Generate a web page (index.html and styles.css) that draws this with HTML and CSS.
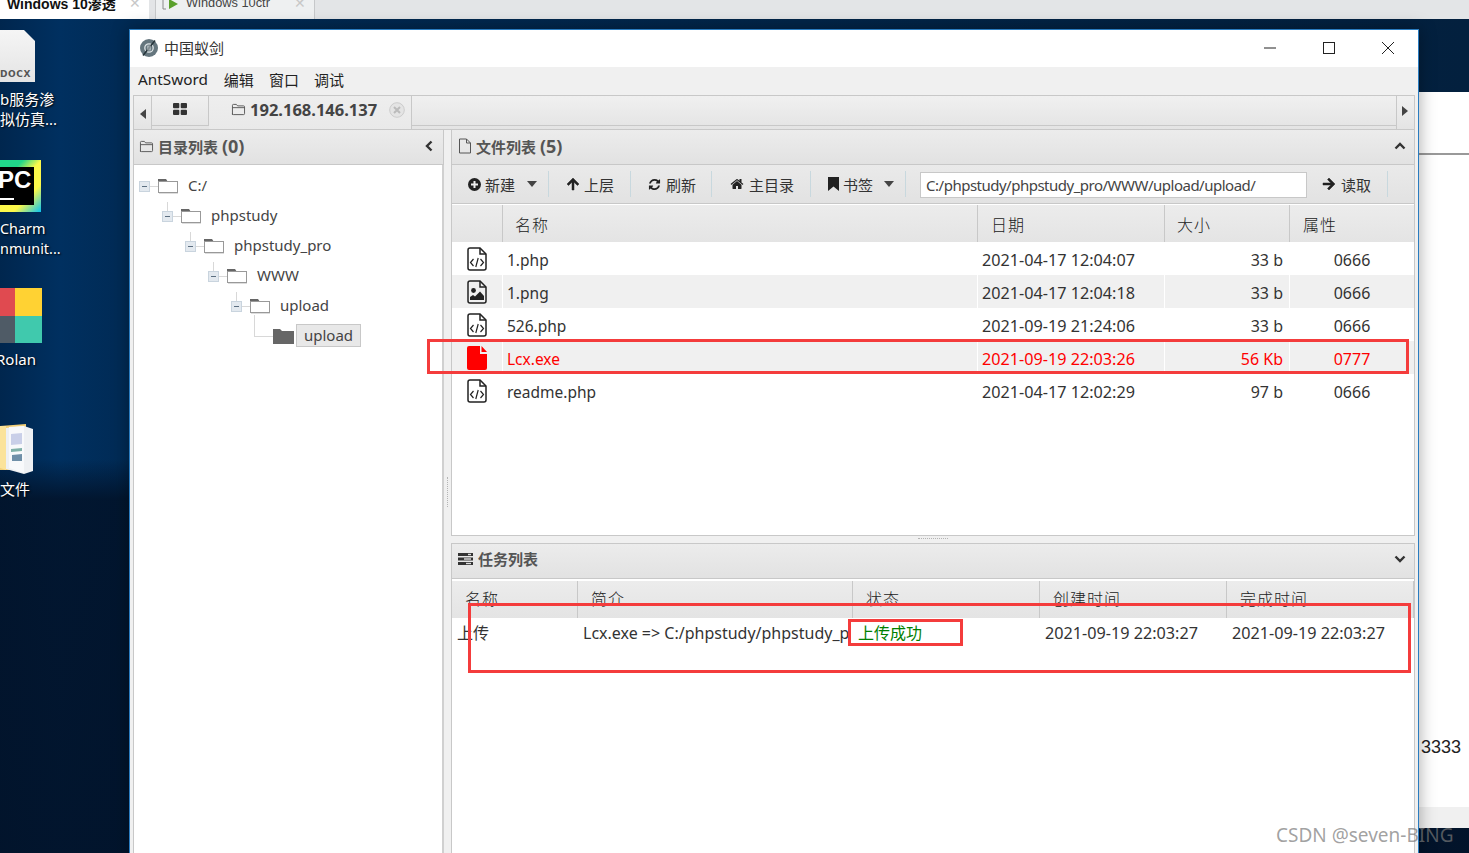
FILE: index.html
```html
<!DOCTYPE html>
<html lang="zh-CN">
<head>
<meta charset="utf-8">
<title>中国蚁剑</title>
<link rel="stylesheet" href="styles.css">
</head>
<body>
<svg class="defs" width="0" height="0" aria-hidden="true">
  <symbol id="i-folder" viewBox="0 0 16 14"><path d="M1.5 12.5V2.5q0-1 1-1h3.2l1.3 1.6h6.5q1 0 1 1v7.4q0 1-1 1h-11q-1 0-1-1zM1.5 5h13" fill="none" stroke="currentColor" stroke-width="1"/></symbol>
  <symbol id="i-tfolder" viewBox="0 0 20 16"><path d="M0 4V1h8l2 3z" fill="#666"/><rect x=".5" y="3.500" width="19" height="11" fill="#fff" stroke="#999"/><path d="M1 15.500h19" stroke="#ddd"/></symbol>
  <symbol id="i-file" viewBox="0 0 14 16"><path d="M1.5 1h7l4 4v10h-11zM8.5 1v4h4" fill="none" stroke="currentColor" stroke-width="1"/></symbol>
  <symbol id="i-refresh" viewBox="0 0 1792 1792"><path fill="currentColor" d="M1639 1056q0 5-1 7-64 268-268 434.5t-478 166.5q-146 0-282.5-55t-243.5-157l-129 129q-19 19-45 19t-45-19-19-45v-448q0-26 19-45t45-19h448q26 0 45 19t19 45-19 45l-137 137q71 66 161 102t187 36q134 0 250-65t186-179q11-17 53-117 8-23 30-23h192q13 0 22.5 9.5t9.5 22.5zm25-800v448q0 26-19 45t-45 19h-448q-26 0-45-19t-19-45 19-45l138-138q-148-137-349-137-134 0-250 65t-186 179q-11 17-53 117-8 23-30 23h-199q-13 0-22.5-9.5t-9.5-22.5v-7q65-268 270-434.5t480-166.5q146 0 284 55.5t245 156.5l130-129q19-19 45-19t45 19 19 45z"/></symbol>
  <symbol id="i-home" viewBox="0 0 1792 1792"><path fill="currentColor" d="M1472 992v480q0 26-19 45t-45 19h-384v-384h-256v384h-384q-26 0-45-19t-19-45v-480q0-1 .5-3t.5-3l575-474 575 474q1 2 1 6zm223-69l-62 74q-8 9-21 11h-3q-13 0-21-7l-692-577-692 577q-12 8-24 7-13-2-21-11l-62-74q-8-10-7-23.5t11-21.5l719-599q32-26 76-26t76 26l244 204v-195q0-14 9-23t23-9h192q14 0 23 9t9 23v408l219 182q10 8 11 21.5t-7 23.5z"/></symbol>
  <symbol id="i-code" viewBox="0 0 20 24"><path d="M1 3q0-2 2-2h10l6 6v14q0 2-2 2H3q-2 0-2-2z" fill="none" stroke="currentColor" stroke-width="1.5"/><path d="M13 1v6h6" fill="none" stroke="currentColor" stroke-width="1.5"/><path d="M6.5 12l-3 3.5 3 3.5M13.5 12l3 3.5-3 3.5M11.2 11l-2.4 9" fill="none" stroke="currentColor" stroke-width="1.2"/></symbol>
  <symbol id="i-image" viewBox="0 0 20 24"><path d="M1 3q0-2 2-2h10l6 6v14q0 2-2 2H3q-2 0-2-2z" fill="none" stroke="currentColor" stroke-width="1.5"/><path d="M13 1v6h6" fill="none" stroke="currentColor" stroke-width="1.5"/><circle cx="6.5" cy="10.5" r="2.4" fill="currentColor"/><path d="M3 20v-3l3-2 2 1.500 5-5 4 4.500V20z" fill="currentColor"/></symbol>
  <symbol id="i-solid" viewBox="0 0 20 24"><path d="M0 2q0-2 2-2h11v8h7v14q0 2-2 2H2q-2 0-2-2z M14.500 0l5.500 6h-5.500z" fill="currentColor"/></symbol>
</svg>

<header class="hosttabs">
  <div class="hosttab active"><span class="hosttab-text">Windows 10渗透</span><span class="hosttab-x">✕</span></div>
  <div class="hosttab other">
    <svg class="vm-icon" viewBox="0 0 18 14" width="18" height="14"><path d="M3 1H1v11h3" fill="none" stroke="#8a8a8a"/><path d="M7 2l9 5-9 5z" fill="#5aa02c"/></svg>
    <span class="hosttab-text light">Windows 10ctr</span><span class="hosttab-x">✕</span>
  </div>
</header>

<main class="desktop">
  <div class="shortcut sc-docx">
    <div class="docx"><span>DOCX</span></div>
  </div>
  <div class="dlabel l-docx">b服务渗<br>拟仿真...</div>
  <div class="shortcut sc-pc"><div class="pc-in"><span>PC</span><i></i></div></div>
  <div class="dlabel l-pc">Charm<br>nmunit...</div>
  <div class="shortcut sc-rolan"><i class="r1"></i><i class="r2"></i><i class="r3"></i><i class="r4"></i></div>
  <div class="dlabel l-rolan">Rolan</div>
  <div class="shortcut sc-files">
    <svg viewBox="0 0 34 52" width="34" height="52"><path d="M0 4l26-2v46H0z" fill="#f2cf78"/><path d="M6 6l18-2 9 3v42l-9 3-18-5z" fill="#eef0f3"/><path d="M9 5l15-1v47L9 46z" fill="#f8f9fb"/><path d="M11 12l11-1v11l-11 1z" fill="#c9cfe8"/><path d="M11 27l11-1v3l-11 1z" fill="#7fb0a8"/><path d="M12 33l10-1v7l-10 0z" fill="#6f8fa8"/><path d="M0 4h6v44l-6-2z" fill="#fbe39a"/></svg>
  </div>
  <div class="dlabel l-files">文件</div>

  <div class="backwin">
    <div class="backwin-line"></div>
    <div class="backwin-num">3333</div>
    <div class="backwin-foot"></div>
  </div>

  <section class="window">
    <div class="titlebar">
      <svg class="logo" viewBox="0 0 20 20" width="20" height="20"><circle cx="10" cy="10" r="9" fill="#65767e"/><circle cx="10" cy="10" r="4.200" fill="none" stroke="#dfe5e7" stroke-width="1.300"/><path d="M16 2.500L4 17.500" stroke="#26343a" stroke-width="1.600"/><path d="M9 7.500v5M11 7.500v5" stroke="#dfe5e7"/></svg>
      <span class="title-text">中国蚁剑</span>
      <div class="winctl">
        <svg viewBox="0 0 14 14" width="14" height="14"><path d="M1 7h12" stroke="#222"/></svg>
        <svg viewBox="0 0 14 14" width="14" height="14"><rect x="1.500" y="1.500" width="11" height="11" fill="none" stroke="#222"/></svg>
        <svg viewBox="0 0 14 14" width="14" height="14"><path d="M1 1l12 12M13 1L1 13" stroke="#222"/></svg>
      </div>
    </div>
    <nav class="menubar"><span class="menu-ant">AntSword</span><span>编辑</span><span>窗口</span><span>调试</span></nav>

    <div class="app">
      <div class="tabbar">
        <div class="tab-arrow"><svg viewBox="0 0 6 10" width="6" height="10"><path d="M6 0v10L0 5z" fill="#444"/></svg></div>
        <div class="tab tab-grid">
          <svg viewBox="0 0 14 12" width="14" height="12"><g fill="#333"><rect width="6.300" height="5.300" rx="1"/><rect x="7.700" width="6.300" height="5.300" rx="1"/><rect y="6.700" width="6.300" height="5.300" rx="1"/><rect x="7.700" y="6.700" width="6.300" height="5.300" rx="1"/></g></svg>
        </div>
        <div class="tab tab-active">
          <svg class="ic-muted" width="15" height="13"><use href="#i-folder"/></svg>
          <span class="tab-ip">192.168.146.137</span>
          <svg class="tab-close" viewBox="0 0 16 16" width="16" height="16"><circle cx="8" cy="8" r="7.300" fill="#e4e4e4" stroke="#ccc"/><path d="M5 5l6 6M11 5l-6 6" stroke="#bbb" stroke-width="2"/></svg>
        </div>
        <div class="tab-fill"></div>
        <div class="tab-arrow tab-arrow-r"><svg viewBox="0 0 6 10" width="6" height="10"><path d="M0 0v10l6-5z" fill="#444"/></svg></div>
      </div>

      <div class="panes">
        <aside class="pane-left">
          <div class="phead">
            <svg class="ic-muted" width="15" height="13"><use href="#i-folder"/></svg>
            <span class="phead-text">目录列表 <span class="pcount">(0)</span></span>
            <svg class="chev" viewBox="0 0 10 12" width="10" height="12"><path d="M7.500 1.500L3 6l4.500 4.500" fill="none" stroke="#333" stroke-width="2.400"/></svg>
          </div>
          <div class="tree">
            <div class="node lv0 first"><i class="exp"></i><i class="dash"></i><svg class="tfolder" width="20" height="16"><use href="#i-tfolder"/></svg><span class="nlabel">C:/</span></div>
            <div class="node lv1"><i class="exp"></i><i class="dash"></i><svg class="tfolder" width="20" height="16"><use href="#i-tfolder"/></svg><span class="nlabel">phpstudy</span></div>
            <div class="node lv2"><i class="exp"></i><i class="dash"></i><svg class="tfolder" width="20" height="16"><use href="#i-tfolder"/></svg><span class="nlabel">phpstudy_pro</span></div>
            <div class="node lv3"><i class="exp"></i><i class="dash"></i><svg class="tfolder" width="20" height="16"><use href="#i-tfolder"/></svg><span class="nlabel">WWW</span></div>
            <div class="node lv4"><i class="exp"></i><i class="dash"></i><svg class="tfolder" width="20" height="16"><use href="#i-tfolder"/></svg><span class="nlabel">upload</span></div>
            <div class="node lv5 leaf"><i class="elbow"></i><svg class="tfolder solid" viewBox="0 0 21 16" width="21" height="16"><path d="M0 16V1h7l2 2h12v13z" fill="#666"/></svg><span class="nlabel selected">upload</span></div>
          </div>
        </aside>

        <div class="gutter"><i class="vdots"></i></div>

        <div class="pane-right">
          <section class="files">
            <div class="phead phead-r">
              <svg class="ic-muted" width="14" height="16"><use href="#i-file"/></svg>
              <span class="phead-text">文件列表 <span class="pcount">(5)</span></span>
              <svg class="chev" viewBox="0 0 12 10" width="12" height="10"><path d="M1.500 7.500L6 3l4.500 4.500" fill="none" stroke="#333" stroke-width="2.400"/></svg>
            </div>
            <div class="toolbar">
              <div class="tbtn b-new">
                <svg viewBox="0 0 13 13" width="13" height="13"><circle cx="6.500" cy="6.500" r="6.500" fill="#222"/><path d="M6.500 3v7M3 6.500h7" stroke="#eee" stroke-width="2"/></svg>
                <span>新建</span><svg class="caret" viewBox="0 0 10 6" width="10" height="6"><path d="M0 0h10L5 6z" fill="#444"/></svg>
              </div>
              <div class="tbtn b-up">
                <svg viewBox="0 0 14 14" width="14" height="14"><path d="M7 1L1 7l1.500 1.500L6 5.200V13h2V5.200l3.500 3.300L13 7z" fill="#222" stroke="#222" stroke-width=".5"/></svg>
                <span>上层</span>
              </div>
              <div class="tbtn b-ref"><svg width="13" height="13"><use href="#i-refresh"/></svg><span>刷新</span></div>
              <div class="tbtn b-home"><svg width="14" height="14"><use href="#i-home"/></svg><span>主目录</span></div>
              <div class="tbtn b-mark">
                <svg viewBox="0 0 11 14" width="11" height="14"><path d="M0 0h11v14L5.500 9.500 0 14z" fill="#222"/></svg>
                <span>书签</span><svg class="caret" viewBox="0 0 10 6" width="10" height="6"><path d="M0 0h10L5 6z" fill="#444"/></svg>
              </div>
              <input class="pathbox" type="text" value="C:/phpstudy/phpstudy_pro/WWW/upload/upload/" aria-label="路径">
              <div class="tbtn b-read">
                <svg viewBox="0 0 14 14" width="14" height="14"><path d="M13 7L7 1 5.500 2.500 8.800 6H1v2h7.800l-3.300 3.500L7 13z" fill="#222" stroke="#222" stroke-width=".5"/></svg>
                <span>读取</span>
              </div>
            </div>
            <div class="fgrid">
              <div class="fhead"><div></div><div>名称</div><div>日期</div><div>大小</div><div>属性</div></div>
              <div class="frow"><div class="ficon"><svg width="20" height="24"><use href="#i-code"/></svg></div><div class="fname">1.php</div><div class="fdate">2021-04-17 12:04:07</div><div class="fsize">33 b</div><div class="fattr">0666</div></div>
              <div class="frow alt"><div class="ficon"><svg width="20" height="24"><use href="#i-image"/></svg></div><div class="fname">1.png</div><div class="fdate">2021-04-17 12:04:18</div><div class="fsize">33 b</div><div class="fattr">0666</div></div>
              <div class="frow"><div class="ficon"><svg width="20" height="24"><use href="#i-code"/></svg></div><div class="fname">526.php</div><div class="fdate">2021-09-19 21:24:06</div><div class="fsize">33 b</div><div class="fattr">0666</div></div>
              <div class="frow alt red"><div class="ficon"><svg width="20" height="24"><use href="#i-solid"/></svg></div><div class="fname">Lcx.exe</div><div class="fdate">2021-09-19 22:03:26</div><div class="fsize">56 Kb</div><div class="fattr">0777</div></div>
              <div class="frow"><div class="ficon"><svg width="20" height="24"><use href="#i-code"/></svg></div><div class="fname">readme.php</div><div class="fdate">2021-04-17 12:02:29</div><div class="fsize">97 b</div><div class="fattr">0666</div></div>
            </div>
          </section>

          <div class="hsplit"><i class="hdots"></i></div>

          <section class="tasks">
            <div class="phead phead-r phead-t">
              <svg viewBox="0 0 15 12" width="15" height="12"><g fill="#333"><rect width="15" height="3"/><rect y="4.500" width="15" height="3"/><rect y="9" width="15" height="3"/></g><g fill="#ddd"><rect x="10" y=".8" width="3" height="1.400"/><rect x="6" y="5.300" width="7" height="1.400"/><rect x="8" y="9.800" width="5" height="1.400"/></g></svg>
              <span class="phead-text">任务列表</span>
              <svg class="chev" viewBox="0 0 12 10" width="12" height="10"><path d="M1.500 2.500L6 7l4.500-4.500" fill="none" stroke="#333" stroke-width="2.400"/></svg>
            </div>
            <div class="tgrid">
              <div class="thead"><div>名称</div><div>简介</div><div>状态</div><div>创建时间</div><div>完成时间</div></div>
              <div class="trow"><div>上传</div><div class="clip">Lcx.exe =&gt; C:/phpstudy/phpstudy_p</div><div class="ok">上传成功</div><div class="tdate">2021-09-19 22:03:27</div><div class="tdate">2021-09-19 22:03:27</div></div>
            </div>
          </section>
        </div>
      </div>
    </div>
  </section>

  <div class="mark m-file"></div>
  <div class="mark m-task"></div>
  <div class="mark m-status"></div>
  <div class="watermark">CSDN @seven-BING</div>
</main>
</body>
</html>
```
FILE: styles.css
```css
* { box-sizing: border-box; }
html, body { margin: 0; height: 100%; overflow: hidden; }
body {
  display: flex;
  flex-direction: column;
  font-family: "Noto Sans", "Noto Sans CJK SC", sans-serif;
  font-size: 16px;
  color: #333;
}
.defs { position: absolute; }

/* host VM tabs */
.hosttabs { height: 19px; flex: none; display: flex; background: #e3e5e7; overflow: hidden; }
.hosttab { height: 19px; display: flex; align-items: center; position: relative; }
.hosttab.active { width: 149px; background: #fff; padding-left: 7px; }
.hosttab.other { width: 160px; margin-left: 6px; padding-left: 6px; background: #eef0f1; border-left: 1px solid #c6c8ca; border-right: 1px solid #c6c8ca; }
.hosttab-text { font: bold 14px/1 "Liberation Sans", "Noto Sans CJK SC", sans-serif; color: #111; position: relative; top: -6px; white-space: nowrap; }
.hosttab-text.light { font-weight: normal; color: #444; font-size: 12.800px; margin-left: 6px; }
.hosttab-x { position: absolute; right: 8px; top: -4px; color: #c8c8c8; font-size: 14px; line-height: 14px; }
.vm-icon { position: relative; top: -6px; }

/* desktop canvas */
.desktop {
  position: relative;
  flex: 1;
  background:
    linear-gradient(180deg, rgba(2,20,44,0) 0, rgba(2,20,44,0) 440px, rgba(2,18,40,.85) 480px, rgba(2,18,40,.9) 100%),
    linear-gradient(90deg, #00264e 0, #003060 60px, #012a54 130px, #03203e 100%);
}
.shortcut { position: absolute; left: 0; }
.sc-docx { top: 11px; }
.docx {
  width: 35px; height: 52px;
  background: linear-gradient(180deg, #f5f5f5, #e4e4e4);
  clip-path: polygon(0 0, 24px 0, 35px 11px, 35px 52px, 0 52px);
  position: relative;
}
.docx span { position: absolute; left: 0; bottom: 3px; font: bold 9px/1 "DejaVu Sans", sans-serif; letter-spacing: .6px; color: #555; }
.sc-pc {
  top: 141px; width: 41px; height: 52px;
  background: linear-gradient(135deg, #21d789 0, #21d789 25%, #fcf84a 45%, #fcf84a 70%, #07c3f2 100%);
}
.pc-in { position: absolute; left: 0; top: 7px; width: 34px; height: 38px; background: #000; overflow: hidden; }
.pc-in span { position: absolute; left: -2px; top: 1px; font: bold 24px/24px "Liberation Sans", sans-serif; color: #fff; }
.pc-in i { position: absolute; left: 0; top: 31px; width: 14px; height: 2px; background: #fff; }
.sc-rolan { top: 269px; width: 42px; height: 55px; display: grid; grid-template-columns: 15px 27px; grid-template-rows: 28px 27px; }
.r1 { background: #e04a50; } .r2 { background: #ffd233; } .r3 { background: #4f5b66; } .r4 { background: #40c9ad; }
.sc-files { top: 403px; }
.sc-files svg { display: block; }
.dlabel { position: absolute; left: 0; font-size: 15px; line-height: 20px; color: #fff; text-shadow: 1px 1px 2px #000; white-space: nowrap; }
.l-docx { top: 70px; }
.l-pc { top: 200px; font-size: 14.400px; }
.l-rolan { top: 330px; left: -4px; }
.l-files { top: 460px; }

/* window behind */
.backwin { position: absolute; left: 1400px; top: 73px; width: 69px; height: 736px; background: #fff; }
.backwin-line { position: absolute; left: 0; right: 0; top: 61px; height: 2px; background: #999; }
.backwin-num { position: absolute; left: 21px; top: 643px; font: 18px/24px "Liberation Sans", sans-serif; color: #222; }
.backwin-foot { position: absolute; left: 0; right: 0; bottom: 0; height: 21px; background: #f0f0f0; }

/* main window */
.window {
  position: absolute; left: 129px; top: 10px; width: 1290px; height: 830px;
  background: #f0f0f0;
  border: 1px solid #2a7cc0;
  box-shadow: 0 0 16px rgba(0,0,0,.35);
  display: flex; flex-direction: column;
}
.titlebar { height: 37px; flex: none; background: #fff; display: flex; align-items: center; padding: 0 0 2px 9px; }
.logo { margin-right: 5px; }
.title-text { font-size: 15px; color: #333; }
.winctl { margin-left: auto; display: flex; gap: 45px; padding-right: 23px; }
.menubar { height: 25px; flex: none; background: #f0f0f0; display: flex; align-items: center; padding: 0 0 1px 8px; color: #222; gap: 15px; }
.menubar span { font-size: 15px; }
.menubar .menu-ant { font-size: 15.300px; margin-right: 1px; }
.app { flex: 1; min-height: 0; padding: 3px 3px 0 3px; display: flex; flex-direction: column; background: #f0f0f0; }

.tabbar { height: 35px; flex: none; display: flex; border: 1px solid #c8c8c8; background: linear-gradient(180deg, #f0f0f0, #e4e4e4); }
.tab-arrow { width: 18px; flex: none; display: flex; align-items: center; justify-content: center; border-right: 1px solid #c8c8c8; padding-top: 3px; }
.tab-arrow-r { border-right: 0; border-left: 1px solid #c8c8c8; padding: 0 2px 3px 0; }
.tab { height: 30px; display: flex; align-items: center; border-right: 1px solid #c8c8c8; flex: none; }
.tab-grid { width: 57px; justify-content: center; border-bottom: 1px solid #c8c8c8; padding-bottom: 4px; }
.tab-active { width: 203px; padding-left: 22px; height: 33px; padding-bottom: 6px; background: linear-gradient(180deg, #eeeeee, #e9e9e9); }
.ic-muted { color: #555; flex: none; }
.tab-ip { font-weight: bold; font-size: 16.500px; color: #444; margin-left: 4px; }
.tab-close { margin-left: 12px; }
.tab-fill { flex: 1; height: 30px; border-bottom: 1px solid #c8c8c8; }

.panes { flex: 1; min-height: 0; display: flex; }
.pane-left { width: 311px; flex: none; display: flex; flex-direction: column; border-left: 1px solid #c8c8c8; }
.phead {
  height: 35px; flex: none; display: flex; align-items: center; padding: 0 9px 2px 5px;
  background: linear-gradient(180deg, #ececec, #e2e2e2);
  border-bottom: 1px solid #c8c8c8; border-right: 1px solid #c8c8c8;
  color: #555;
}
.phead-text { font-size: 15px; font-weight: bold; margin-left: 4px; color: #555; white-space: nowrap; }
.pcount { font-size: 18px; }
.phead .chev { margin-left: auto; }

.tree { flex: 1; background: #fff; border-right: 2px solid #d0d0d0; padding-top: 6px; width: 310px; }
.node { height: 30px; display: flex; align-items: center; position: relative; color: #444; font-size: 15px; }
.lv0 { padding-left: 5px; } .lv1 { padding-left: 28px; } .lv2 { padding-left: 51px; }
.lv3 { padding-left: 74px; } .lv4 { padding-left: 97px; } .lv5 { padding-left: 120px; }
.exp { width: 11px; height: 11px; flex: none; background: #e3e9ef; border: 1px solid #c9d4de; position: relative; }
.exp::after { content: ""; position: absolute; left: 2px; top: 4px; width: 5px; height: 1px; background: #5b6e80; }
.node:not(.first):not(.leaf) .exp::before { content: ""; position: absolute; left: 4px; top: -10px; width: 1px; height: 9px; background: #d8d8d8; }
.dash { width: 8px; height: 1px; flex: none; background: #d8d8d8; }
.tfolder { flex: none; }
.nlabel { margin: -2px 0 0 10px; white-space: nowrap; }
.lv5 .nlabel { margin: -2px 0 0 2px; }
.elbow { width: 19px; height: 22px; flex: none; border-left: 1px solid #d8d8d8; border-bottom: 1px solid #d8d8d8; margin-top: -20px; }
.selected { background: #e8e8e8; border: 1px solid #c8c8c8; padding: 0 7px; line-height: 21px; height: 23px; }

.gutter { width: 7px; flex: none; position: relative; background: #f0f0f0; }
.vdots { position: absolute; left: 3px; top: 347px; height: 30px; border-left: 1px dotted #b4b4b4; }
.pane-right { flex: 1; min-width: 0; display: flex; flex-direction: column; }
.files { height: 406px; flex: none; display: flex; flex-direction: column; background: #fff; border: 1px solid #c8c8c8; border-top: 0; }
.phead-r { height: 35px; padding: 0 8px 2px 6px; border-right: 0; }
.phead-r .phead-text { margin-left: 4px; }
.phead-t { height: 35px; padding-bottom: 5px; }
.phead-t .phead-text { margin-left: 5px; }
.toolbar { height: 39px; flex: none; display: flex; align-items: center; background: linear-gradient(180deg, #eaeaea, #e2e2e2); border-bottom: 1px solid #c8c8c8; }
.tbtn { height: 26px; display: flex; align-items: center; border-right: 1px solid #c8d8de; font-size: 15px; color: #333; flex: none; }
.tbtn svg { flex: none; color: #222; }
.tbtn span { margin-left: 4px; white-space: nowrap; }
.tbtn .caret { margin-left: 12px; }
.b-new { padding: 0 11px 0 16px; }
.b-up { padding: 0 16px 0 17px; }
.b-ref { padding: 0 15px 0 17px; }
.b-ref span { margin-left: 5px; }
.b-home { padding: 0 16px 0 18px; }
.b-home span { margin-left: 5px; }
.b-mark { padding: 0 11px 0 17px; }
.b-mark span { margin-left: 4px; }
.b-mark .caret { margin-left: 11px; }
.b-read { padding: 0 16px 0 15px; }
.b-read span { margin-left: 5px; }
.pathbox { width: 387px; height: 26px; margin: 2px 0 0 14px; border: 1px solid #c8c8c8; padding: 0 5px; font: 15px "Noto Sans", sans-serif; letter-spacing: -.5px; color: #444; background: #fff; flex: none; }

.fgrid { flex: 1; padding-top: 1px; }
.fhead, .frow { display: grid; grid-template-columns: 51px 475px 187px 125px 1fr; }
.fhead { height: 37px; background: linear-gradient(180deg, #ececec, #e4e4e4); color: #222; }
.fhead div { border-right: 1px solid #c8c8c8; padding-left: 13px; line-height: 40px; font-weight: 300; letter-spacing: 1px; }
.fhead div:nth-child(2) { padding-left: 12px; }
.fhead div:nth-child(4) { padding-left: 12px; }
.fhead div:last-child { border-right: 0; }
.frow { height: 33px; background: #fff; line-height: 37px; color: #333; }
.frow.alt { background: #f0f0f0; }
.frow div { padding-left: 4px; border-right: 1px solid #fff; white-space: nowrap; height: 33px; }
.frow div:last-child { border-right: 0; }
.frow .fname { font-size: 15.500px; }
.frow .fdate { font-size: 16.200px; }
.frow .ficon { display: flex; align-items: center; padding-left: 15px; color: #222; }
.frow .fsize { text-align: right; padding: 0 6px 0 0; }
.frow .fattr { text-align: center; padding: 0 0 0 0; }
.red, .red .ficon { color: #f00; }

.hsplit { height: 7px; flex: none; position: relative; }
.hdots { position: absolute; left: 467px; top: 2px; width: 30px; border-top: 1px dotted #b4b4b4; }
.tasks { flex: 1; min-height: 0; background: #fff; border: 1px solid #c8c8c8; border-bottom: 0; display: flex; flex-direction: column; }
.tgrid { flex: 1; padding-top: 2px; }
.thead, .trow { display: grid; grid-template-columns: 126px 275px 187px 187px 1fr; }
.thead { height: 37px; background: linear-gradient(180deg, #ececec, #e4e4e4); color: #222; }
.thead div { border-right: 1px solid #c8c8c8; padding-left: 13px; line-height: 36px; font-weight: 300; letter-spacing: 1px; }
.trow { height: 33px; line-height: 30px; color: #333; }
.trow div { padding-left: 5px; white-space: nowrap; overflow: hidden; }
.trow .ok { color: #008000; }
.trow .clip { padding-right: 0; }
.trow .tdate { font-size: 16.200px; }

/* red annotations drawn on the screenshot */
.mark { position: absolute; border: 3px solid #f43c3c; pointer-events: none; }
.m-file { left: 427px; top: 320px; width: 982px; height: 35px; }
.m-task { left: 468px; top: 584px; width: 943px; height: 70px; }
.m-status { left: 848px; top: 600px; width: 115px; height: 27px; }
.watermark { position: absolute; left: 1276px; top: 802px; font-size: 19px; line-height: 28px; color: rgba(120,120,120,.7); white-space: nowrap; }
```
